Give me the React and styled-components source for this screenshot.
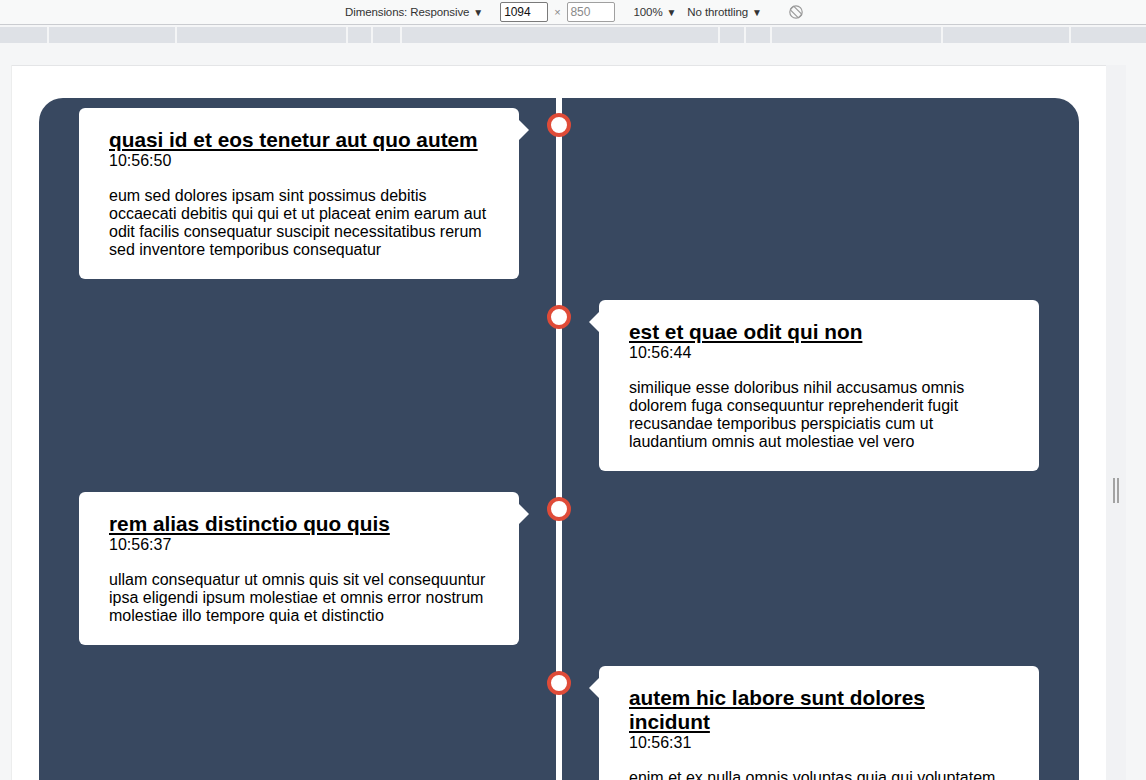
import React from 'react';
import styled, { createGlobalStyle } from 'styled-components';

const GlobalStyle = createGlobalStyle`
  html, body { margin: 0; padding: 0; height: 100%; overflow: hidden; background: #f5f6f7; }
  body { font-family: "Liberation Sans", Arial, sans-serif; }
  * { box-sizing: border-box; }
`;

const Shell = styled.div`
  width: 1146px;
  height: 780px;
  overflow: hidden;
  display: flex;
  flex-direction: column;
  background: #f5f6f7;
`;

const Toolbar = styled.div`
  height: 25px;
  flex: none;
  display: flex;
  align-items: center;
  padding-left: 345px;
  background: #f8f9f9;
  border-bottom: 1px solid #caccd0;
  font-family: "Liberation Sans", Arial, sans-serif;
  font-size: 11.5px;
  letter-spacing: -0.1px;
  color: #333;
`;

const Drop = styled.span`
  display: inline-flex;
  align-items: center;
  gap: 4px;
  margin-left: ${p => p.$ml || 0}px;
  white-space: nowrap;
`;

const Caret = styled.span`
  font-size: 10px;
  color: #333;
`;

const SizeInput = styled.div`
  width: 48px;
  height: 20px;
  margin-left: ${p => p.$ml || 0}px;
  border: 1px solid ${p => (p.$muted ? '#a0a0a0' : '#7a7a7a')};
  border-radius: 2px;
  background: #fff;
  padding: 2px 0 0 3px;
  color: ${p => (p.$muted ? '#8a8a8a' : '#111')};
  font-size: 12px;
  line-height: 14px;
`;

const Times = styled.span`
  margin-left: 6px;
  color: #888;
  font-size: 11px;
`;

const IconWrap = styled.span`
  margin-left: 26px;
  display: inline-flex;
`;

const Ruler = styled.div`
  height: 16px;
  margin-top: 2px;
  flex: none;
  display: flex;
  gap: 2px;
  background: #f4f5f6;
`;

const Segment = styled.div`
  flex: none;
  width: ${p => p.$w}px;
  height: 100%;
  background: #dee1e6;
`;

const Stage = styled.div`
  flex: 1;
  display: flex;
  align-items: flex-start;
  padding: 22px 0 0 12px;
  min-height: 0;
`;

const Page = styled.div`
  flex: none;
  width: 1094px;
  height: 850px;
  background: #fff;
  border-top: 1px solid #e4e5e7;
  box-shadow: -1px 0 0 #eceded;
  padding: 32px 27px 0;
  overflow: hidden;
`;

const Strip = styled.div`
  flex: none;
  width: 20px;
  height: 850px;
  background: #f1f2f4;
  display: flex;
  align-items: center;
  justify-content: center;
  gap: 2px;
`;

const Grip = styled.div`
  width: 2px;
  height: 25px;
  background: #a3a3a3;
`;

const Timeline = styled.div`
  position: relative;
  background: #384860;
  border-radius: 24px;
  padding: 10px 0;
  display: flex;
  flex-direction: column;
  gap: 21px;
  &::after {
    content: '';
    position: absolute;
    top: 0;
    bottom: 0;
    left: 50%;
    width: 6px;
    margin-left: -3px;
    background: #fff;
  }
`;

const Item = styled.div`
  position: relative;
  width: 50%;
  padding: 0 40px;
  align-self: ${p => (p.$side === 'left' ? 'flex-start' : 'flex-end')};
`;

const Dot = styled.span`
  position: absolute;
  z-index: 1;
  top: 5px;
  ${p => (p.$side === 'left' ? 'right: -12px;' : 'left: -12px;')}
  width: 24px;
  height: 24px;
  border-radius: 50%;
  border: 4px solid #df4b38;
  background: #fff;
`;

const Card = styled.div`
  position: relative;
  background: #fff;
  border-radius: 6px;
  padding: 20px 30px;
  color: #000;
  &::before {
    content: '';
    position: absolute;
    top: 12px;
    width: 0;
    height: 0;
    border-top: 10px solid transparent;
    border-bottom: 10px solid transparent;
    ${p =>
      p.$side === 'left'
        ? 'right: -10px; border-left: 10px solid #fff;'
        : 'left: -10px; border-right: 10px solid #fff;'}
  }
`;

const Title = styled.h2`
  margin: 0;
  font-size: 20.8px;
  line-height: 24px;
  font-weight: bold;
  text-decoration: underline;
`;

const Time = styled.div`
  font-size: 16px;
`;

const Text = styled.p`
  margin: 17px 0 0;
  font-size: 16px;
`;

const RotateIcon = () => (
  <svg width="16" height="16" viewBox="0 0 16 16" fill="none" stroke="#9a9a9a" strokeWidth="1.2">
    <circle cx="8" cy="8" r="6.2" />
    <rect x="5.5" y="2.2" width="5" height="11.6" rx="1" transform="rotate(-45 8 8)" />
  </svg>
);

const segments = [47, 126, 169, 23, 27, 316, 24, 24, 169, 126, 75];

const events = [
  {
    side: 'left',
    title: 'quasi id et eos tenetur aut quo autem',
    time: '10:56:50',
    text: 'eum sed dolores ipsam sint possimus debitis occaecati debitis qui qui et ut placeat enim earum aut odit facilis consequatur suscipit necessitatibus rerum sed inventore temporibus consequatur',
  },
  {
    side: 'right',
    title: 'est et quae odit qui non',
    time: '10:56:44',
    text: 'similique esse doloribus nihil accusamus omnis dolorem fuga consequuntur reprehenderit fugit recusandae temporibus perspiciatis cum ut laudantium omnis aut molestiae vel vero',
  },
  {
    side: 'left',
    title: 'rem alias distinctio quo quis',
    time: '10:56:37',
    text: 'ullam consequatur ut omnis quis sit vel consequuntur ipsa eligendi ipsum molestiae et omnis error nostrum molestiae illo tempore quia et distinctio',
  },
  {
    side: 'right',
    title: 'autem hic labore sunt dolores incidunt',
    time: '10:56:31',
    text: 'enim et ex nulla omnis voluptas quia qui voluptatem consequatur numquam aliquam sunt totam recusandae id dignissimos aut sed asperiores deserunt',
  },
];

export default function App() {
  return (
    <>
      <GlobalStyle />
      <Shell>
        <Toolbar>
          <Drop>
            Dimensions: Responsive <Caret>▼</Caret>
          </Drop>
          <SizeInput $ml={17}>1094</SizeInput>
          <Times>×</Times>
          <SizeInput $ml={6} $muted>850</SizeInput>
          <Drop $ml={19}>
            100% <Caret>▼</Caret>
          </Drop>
          <Drop $ml={11}>
            No throttling <Caret>▼</Caret>
          </Drop>
          <IconWrap>
            <RotateIcon />
          </IconWrap>
        </Toolbar>
        <Ruler>
          {segments.map((w, i) => (
            <Segment key={i} $w={w} />
          ))}
        </Ruler>
        <Stage>
          <Page>
            <Timeline>
              {events.map((e, i) => (
                <Item key={i} $side={e.side}>
                  <Dot $side={e.side} />
                  <Card $side={e.side}>
                    <Title>{e.title}</Title>
                    <Time>{e.time}</Time>
                    <Text>{e.text}</Text>
                  </Card>
                </Item>
              ))}
            </Timeline>
          </Page>
          <Strip>
            <Grip />
            <Grip />
          </Strip>
        </Stage>
      </Shell>
    </>
  );
}
